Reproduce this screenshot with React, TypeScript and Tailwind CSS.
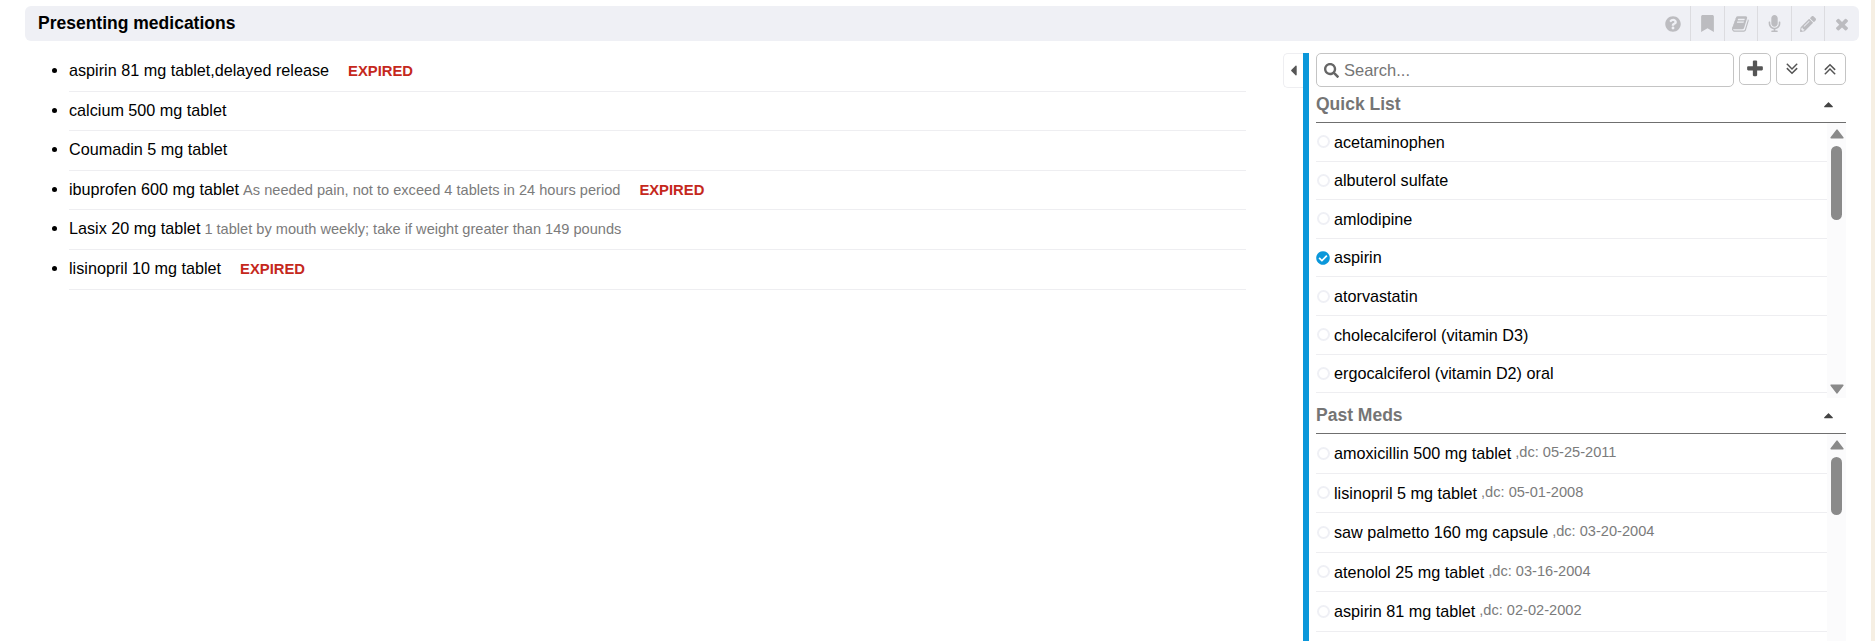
import { FaQuestionCircle, FaBookmark, FaMicrophone, FaPencilAlt, FaSearch, FaCaretUp, FaCaretLeft, FaCheckCircle } from "react-icons/fa";

const presenting = [
  { name: "aspirin 81 mg tablet,delayed release", expired: true },
  { name: "calcium 500 mg tablet" },
  { name: "Coumadin 5 mg tablet" },
  { name: "ibuprofen 600 mg tablet", note: "As needed pain, not to exceed 4 tablets in 24 hours period", expired: true },
  { name: "Lasix 20 mg tablet", note: "1 tablet by mouth weekly; take if weight greater than 149 pounds" },
  { name: "lisinopril 10 mg tablet", expired: true },
];

const quickList = [
  "acetaminophen",
  "albuterol sulfate",
  "amlodipine",
  "aspirin",
  "atorvastatin",
  "cholecalciferol (vitamin D3)",
  "ergocalciferol (vitamin D2) oral",
];

const pastMeds = [
  { name: "amoxicillin 500 mg tablet", dc: ",dc: 05-25-2011" },
  { name: "lisinopril 5 mg tablet", dc: ",dc: 05-01-2008" },
  { name: "saw palmetto 160 mg capsule", dc: ",dc: 03-20-2004" },
  { name: "atenolol 25 mg tablet", dc: ",dc: 03-16-2004" },
  { name: "aspirin 81 mg tablet", dc: ",dc: 02-02-2002" },
];

function Fa4({ d, className }: { d: string; className: string }) {
  return (
    <svg viewBox="0 0 1792 1792" fill="currentColor" className={className}>
      <path d={d} />
    </svg>
  );
}

const bookPath =
  "M1639 478q40 57 18 129l-275 906q-19 64-76.5 107.5t-122.5 43.5h-923q-77 0-148.5-53.5t-99.5-131.5q-24-67-2-127 0-4 3-27t4-37q1-8-3-21.5t-3-19.5q2-11 8-21t16.5-23.5 16.5-23.5q23-38 45-91.5t30-91.5q3-10 .5-30t-.5-28q3-11 17-28t17-23q21-36 42-92t25-90q1-9-2.5-32t.5-28q4-13 22-30.5t22-22.5q19-26 42.5-84.5t27.5-96.5q1-8-3-25.5t-2-26.5q2-8 9-18t18-23 17-21q8-12 16.5-30.5t15-35 16-36 19.5-32 26.5-23.5 36-11.5 47.5 5.5l-1 3q38-9 51-9h761q74 0 114 56t18 130l-274 906q-36 119-71.5 153.5t-128.5 34.5h-869q-27 0-38 15-11 16-1 43 24 70 144 70h923q29 0 56-15.5t35-41.5l300-987q7-22 5-57 38 15 59 43zm-1064 2q-4 13 2 22.5t20 9.5h608q13 0 25.5-9.5t16.5-22.5l21-64q4-13-2-22.5t-20-9.5h-608q-13 0-25.5 9.5t-16.5 22.5zm-83 256q-4 13 2 22.5t20 9.5h608q13 0 25.5-9.5t16.5-22.5l21-64q4-13-2-22.5t-20-9.5h-608q-13 0-25.5 9.5t-16.5 22.5z";
const timesPath =
  "M1490 1322q0 40-28 68l-136 136q-28 28-68 28t-68-28l-294-294-294 294q-28 28-68 28t-68-28l-136-136q-28-28-28-68t28-68l294-294-294-294q-28-28-28-68t28-68l136-136q28-28 68-28t68 28l294 294 294-294q28-28 68-28t68 28l136 136q28 28 28 68t-28 68l-294 294 294 294q28 28 28 68z";
const plusPath =
  "M1600 736v192q0 40-28 68t-68 28h-416v416q0 40-28 68t-68 28h-192q-40 0-68-28t-28-68v-416h-416q-40 0-68-28t-28-68v-192q0-40 28-68t68-28h416v-416q0-40 28-68t68-28h192q40 0 68 28t28 68v416h416q40 0 68 28t28 68z";
const doubleDownPath =
  "M1395 864q0 13-10 23l-466 466q-10 10-23 10t-23-10l-466-466q-10-10-10-23t10-23l50-50q10-10 23-10t23 10l393 393 393-393q10-10 23-10t23 10l50 50q10 10 10 23zm0-384q0 13-10 23l-466 466q-10 10-23 10t-23-10l-466-466q-10-10-10-23t10-23l50-50q10-10 23-10t23 10l393 393 393-393q10-10 23-10t23 10l50 50q10 10 10 23z";

function Radio({ checked }: { checked?: boolean }) {
  if (checked) return <FaCheckCircle className="w-[14px] h-[14px] mr-[4px] shrink-0 text-[#0b97da]" />;
  return <span className="w-[13px] h-[13px] ml-[1px] mr-[4px] shrink-0 rounded-full border-2 border-[#eff0f5]" />;
}

function Arrow({ className }: { className: string }) {
  return (
    <svg viewBox="0 0 14 10" className={`w-[14px] h-[10px] shrink-0 text-[#8a8a8a] ${className}`}>
      <path d="M7 1.2 12.8 8.8H1.2Z" fill="currentColor" stroke="currentColor" strokeWidth="1.6" strokeLinejoin="round" />
    </svg>
  );
}

function Scrollbar({ thumbClass }: { thumbClass: string }) {
  return (
    <div className="w-[19px] shrink-0 bg-[#fbfbfc] flex flex-col items-center pt-[6px] pb-[4px]">
      <Arrow className="" />
      <div className={`w-[11px] rounded-full bg-[#8a8a8a] shrink-0 ${thumbClass}`} />
      <Arrow className="mt-auto rotate-180" />
    </div>
  );
}

function SectionHead({ title }: { title: string }) {
  return (
    <div className="flex items-center justify-between h-[36px] border-b border-[#6f6f6f] pr-[10px] text-[#757575]">
      <span className="text-[17.5px] font-bold">{title}</span>
      <FaCaretUp className="w-[15px] h-[15px] text-[#444]" />
    </div>
  );
}

function ToolIcon({ i }: { i: number }) {
  const cls = "text-[#bcbcc0]";
  if (i === 0) return <FaQuestionCircle className={`w-[16px] h-[16px] ${cls}`} />;
  if (i === 1) return <FaBookmark className={`w-[17px] h-[17px] ${cls}`} />;
  if (i === 2) return <Fa4 d={bookPath} className={`w-[18px] h-[18px] ${cls}`} />;
  if (i === 3) return <FaMicrophone className={`w-[17px] h-[17px] ${cls}`} />;
  if (i === 4) return <FaPencilAlt className={`w-[16px] h-[16px] ${cls}`} />;
  return <Fa4 d={timesPath} className={`w-[18px] h-[18px] ${cls}`} />;
}

export default function App() {
  return (
    <div className="flex h-[641px] overflow-hidden bg-white text-[16.2px] text-black font-['Liberation_Sans',Arial,sans-serif]">
      <div className="flex-1 min-w-0 pl-[25px] pr-[12px] pt-[6px]">
        <div className="flex items-center justify-between h-[35px] rounded-[6px] bg-[#eff0f5] pl-[13px] pr-[1px]">
          <h1 className="text-[17.5px] font-bold">Presenting medications</h1>
          <div className="flex h-full">
            {[0, 1, 2, 3, 4, 5].map((i) => (
              <div key={i} className={`w-[33.6px] flex items-center justify-center ${i > 0 ? "border-l border-[#dcdce0]" : ""}`}>
                <ToolIcon i={i} />
              </div>
            ))}
          </div>
        </div>

        <div className="flex mt-[12px]">
          <ul className="w-[1177px] ml-[44px] mt-[-1px] shrink-0 list-disc">
            {presenting.map((m) => (
              <li key={m.name} className="h-[39.6px] pt-[7px] border-b border-[#eeeef1] leading-[22px]">
                {m.name}
                {m.note && <span className="ml-[4px] text-[14.6px] text-[#7b7b7b]">{m.note}</span>}
                {m.expired && <span className="ml-[19px] text-[14.8px] font-bold text-[#c5281c]">EXPIRED</span>}
              </li>
            ))}
          </ul>

          <div className="ml-[37px] w-[20px] h-[35px] shrink-0 rounded-l-[5px] border border-r-0 border-[#eeeef1] flex items-center justify-center">
            <FaCaretLeft className="w-[17px] h-[17px] text-[#555]" />
          </div>

          <div className="w-[543px] shrink-0 border-l-[6px] border-[#0b97da] pl-[7px] h-[600px] overflow-hidden">
            <div className="flex items-start">
              <div className="flex items-center w-[418px] h-[34px] rounded-[5px] border border-[#c4c4c4] pl-[7px]">
                <FaSearch className="w-[15px] h-[15px] text-[#666] mr-[5px]" />
                <span className="text-[#757575] text-[16.5px]">Search...</span>
              </div>
              <button className="ml-[5px] w-[32px] h-[32px] rounded-[5px] border border-[#c4c4c4] flex items-center justify-center">
                <Fa4 d={plusPath} className="w-[20px] h-[20px] text-[#555]" />
              </button>
              <button className="ml-[5px] w-[32px] h-[32px] rounded-[5px] border border-[#c4c4c4] flex items-center justify-center">
                <Fa4 d={doubleDownPath} className="w-[20px] h-[20px] text-[#555]" />
              </button>
              <button className="ml-[6px] w-[32px] h-[32px] rounded-[5px] border border-[#c4c4c4] flex items-center justify-center">
                <Fa4 d={doubleDownPath} className="w-[20px] h-[20px] rotate-180 text-[#555]" />
              </button>
            </div>

            <SectionHead title="Quick List" />
            <div className="flex h-[275px]">
              <div className="flex-1">
                {quickList.map((q) => (
                  <div key={q} className="flex items-center h-[38.6px] border-b border-[#eeeef1]">
                    <Radio checked={q === "aspirin"} />
                    {q}
                  </div>
                ))}
              </div>
              <Scrollbar thumbClass="h-[74px] mt-[7px]" />
            </div>

            <SectionHead title="Past Meds" />
            <div className="flex h-[300px]">
              <div className="flex-1">
                {pastMeds.map((p) => (
                  <div key={p.name} className="flex items-center h-[39.5px] border-b border-[#eeeef1]">
                    <Radio />
                    {p.name}
                    <span className="ml-[4px] text-[14.6px] text-[#7b7b7b]">{p.dc}</span>
                  </div>
                ))}
              </div>
              <Scrollbar thumbClass="h-[58px] mt-[7px]" />
            </div>
          </div>
        </div>
      </div>
      <div className="w-[4px] shrink-0 bg-[#f6efe3]" />
    </div>
  );
}
